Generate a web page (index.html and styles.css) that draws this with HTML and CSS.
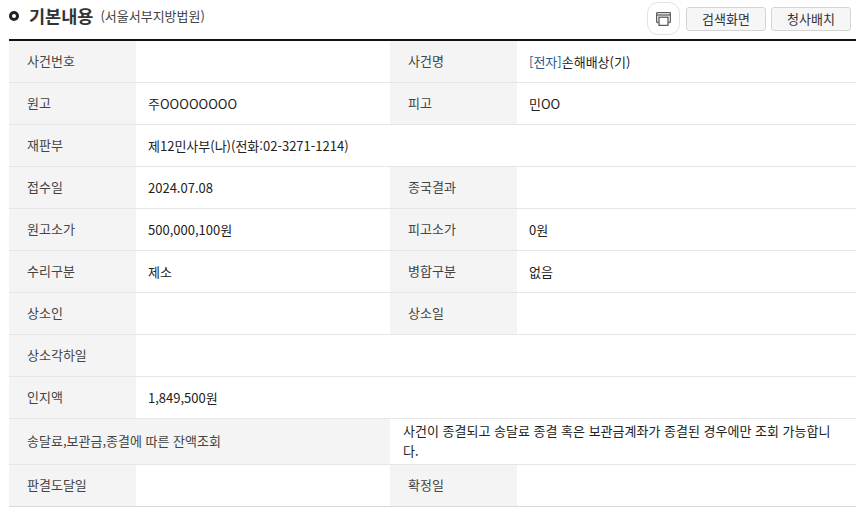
FILE: index.html
```html
<!DOCTYPE html>
<html lang="ko">
<head>
<meta charset="utf-8">
<title>기본내용</title>
<link rel="stylesheet" href="styles.css">
</head>
<body>
<div class="head">
  <h2 class="title"><span class="ring"></span><span class="name">기본내용</span><small>(서울서부지방법원)</small></h2>
  <div class="actions">
    <button class="print" aria-label="인쇄">
      <svg width="15" height="14" viewBox="0 0 15 14" fill="none" stroke="#5c5c5c" stroke-width="1.3"><path d="M2.5 10.5H1.6a1 1 0 0 1-1-1V1.6a1 1 0 0 1 1-1h11.8a1 1 0 0 1 1 1v7.9a1 1 0 0 1-1 1h-.9"/><path d="M.8 3h13.4"/><rect x="3" y="5.2" width="9" height="8.2"/></svg>
    </button>
    <button class="btn">검색화면</button>
    <button class="btn">청사배치</button>
  </div>
</div>
<table class="info">
  <colgroup><col class="c1"><col class="c2"><col class="c3"><col class="c4"></colgroup>
  <tr><th>사건번호</th><td></td><th>사건명</th><td><span class="tag">[전자]</span>손해배상(기)</td></tr>
  <tr><th>원고</th><td>주OOOOOOOO</td><th>피고</th><td>민OO</td></tr>
  <tr><th>재판부</th><td colspan="3">제12민사부(나)(전화:02-3271-1214)</td></tr>
  <tr><th>접수일</th><td>2024.07.08</td><th>종국결과</th><td></td></tr>
  <tr><th>원고소가</th><td>500,000,100원</td><th>피고소가</th><td>0원</td></tr>
  <tr><th>수리구분</th><td>제소</td><th>병합구분</th><td>없음</td></tr>
  <tr><th>상소인</th><td></td><th>상소일</th><td></td></tr>
  <tr><th>상소각하일</th><td colspan="3"></td></tr>
  <tr><th>인지액</th><td colspan="3">1,849,500원</td></tr>
  <tr class="tall"><th colspan="2">송달료,보관금,종결에 따른 잔액조회</th><td colspan="2" class="note">사건이 종결되고 송달료 종결 혹은 보관금계좌가 종결된 경우에만 조회 가능합니다.</td></tr>
  <tr class="last"><th>판결도달일</th><td></td><th>확정일</th><td></td></tr>
</table>
</body>
</html>
```
FILE: styles.css
```css
* { box-sizing: border-box; }
html, body { margin: 0; padding: 0; background: #fff; }
body {
  width: 868px;
  height: 511px;
  overflow: hidden;
  padding: 0 12px 0 9px;
  font-family: "Noto Sans CJK KR", "Noto Sans", sans-serif;
  font-size: 13px;
  color: #222;
}
.head {
  height: 39px;
  display: flex;
  justify-content: space-between;
  align-items: flex-start;
}
.title {
  margin: 3px 0 0;
  display: flex;
  align-items: center;
  font-weight: 400;
  line-height: 24px;
  white-space: pre;
}
.name { font-size: 17.5px; font-weight: 700; color: #333; margin-right: 7px; }
.title small { font-size: 13px; font-weight: 400; color: #444; margin-top: 1px; }
.ring {
  width: 10px;
  height: 10px;
  border: 3px solid #222;
  border-radius: 50%;
  margin: 1px 10px 0 0;
}
.actions {
  display: flex;
  align-items: flex-start;
  gap: 5px;
  margin-top: 2px;
  padding-right: 5px;
}
.print {
  width: 33px;
  height: 33px;
  padding: 0;
  margin-right: 1px;
  display: flex;
  align-items: center;
  justify-content: center;
  background: #fff;
  border: 1px solid #e2e2e2;
  border-radius: 11px;
}
.btn {
  width: 80px;
  height: 24px;
  margin-top: 5px;
  padding: 0;
  font: inherit;
  font-size: 13px;
  line-height: 22px;
  color: #333;
  background: #f6f6f6;
  border: 1px solid #d4d4d4;
  border-radius: 3px;
}
.info {
  width: 847px;
  table-layout: fixed;
  border-collapse: separate;
  border-spacing: 0;
  border-top: 2px solid #111;
}
.c1, .c3 { width: 127px; }
.c2 { width: 254px; }
.c4 { width: 339px; }
.info tr { height: 42px; }
.info th, .info td {
  padding: 0 12px;
  border-bottom: 1px solid #e6e6e6;
  font-weight: 400;
  text-align: left;
  line-height: 20px;
}
.info th { background: #f4f4f4; color: #444; padding: 0 18px 1px; }
.info td { color: #222; }
.info tr.tall { height: 46px; }
.info td.note { padding: 0 12px 2px 13px; }
.tag { color: #2a5a8c; }
.last th, .last td { border-bottom-color: #d8d8d8; }
```
